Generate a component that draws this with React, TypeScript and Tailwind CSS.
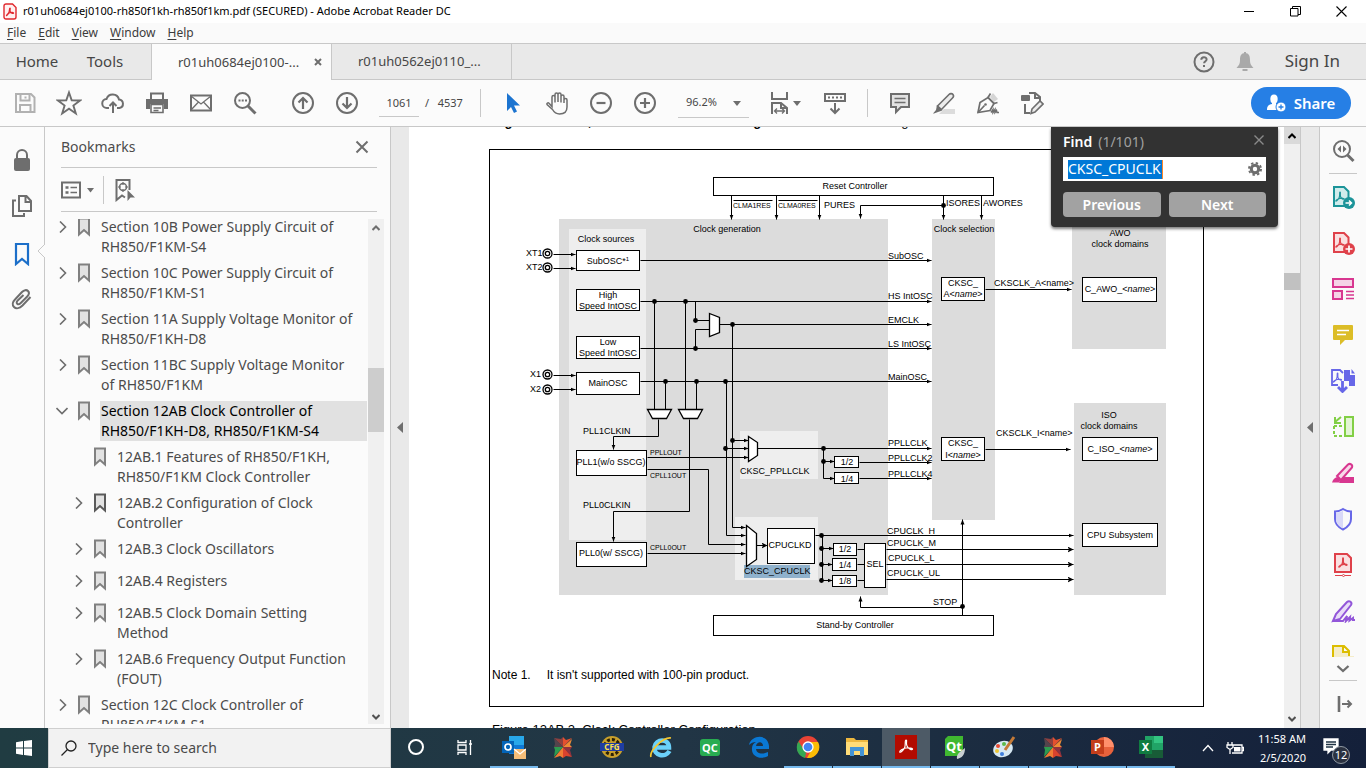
import React from "react";

type IconProps = { children: React.ReactNode; w?: number; h?: number; className?: string; sw?: number };

function Icon({ children, w = 24, h = 24, className = "text-[#6e6e6e]", sw = 2 }: IconProps) {
  return (
    <svg width={w} height={h} viewBox={`0 0 ${w} ${h}`} className={`shrink-0 ${className}`} fill="none" stroke="currentColor" strokeWidth={sw} aria-hidden="true">
      {children}
    </svg>
  );
}

function ToolButton({ label, children }: { label: string; children: React.ReactNode }) {
  return (
    <button type="button" aria-label={label} className="flex h-11 w-11 shrink-0 items-center justify-center">
      {children}
    </button>
  );
}

function TitleBar() {
  return (
    <header className="flex h-[23px] shrink-0 items-center bg-white">
      <svg width="14" height="17" viewBox="0 0 14 17" className="ml-[3px] shrink-0" fill="none" stroke="#e0282e" aria-hidden="true">
        <path d="M3 1h6.5L13 4.500V14a2 2 0 0 1-2 2H3a2 2 0 0 1-2-2V3a2 2 0 0 1 2-2Z" fill="#fff1f1" strokeWidth="1.4" />
        <path d="M7 5c-1 0-.3 3-1.200 4.500S3 12.500 3.500 12.700s1.800-2.500 3.200-3 4-.4 4 .4-2.200.3-3.200-1S7.800 5 7 5Z" strokeWidth="1.100" />
      </svg>
      <h1 className="ml-1.5 text-[11px] whitespace-nowrap text-black">r01uh0684ej0100-rh850f1kh-rh850f1km.pdf (SECURED) - Adobe Acrobat Reader DC</h1>
      <div className="mr-0.5 ml-auto flex text-black">
        <button type="button" aria-label="Minimize" className="flex h-5 w-[46px] items-center justify-center">
          <Icon w={11} h={11} sw={1} className="text-black"><path d="M0 5.500h10" /></Icon>
        </button>
        <button type="button" aria-label="Restore" className="flex h-5 w-[46px] items-center justify-center">
          <Icon w={11} h={11} sw={1} className="text-black"><path d="M.5 2.500h7.500v7.500H.5zM2.500 2.500v-2h8v8H8" /></Icon>
        </button>
        <button type="button" aria-label="Close" className="flex h-5 w-[46px] items-center justify-center">
          <Icon w={11} h={11} sw={1.1} className="text-black"><path d="m.5.5 10 10m0-10-10 10" /></Icon>
        </button>
      </div>
    </header>
  );
}

function MenuBar() {
  return (
    <nav className="flex h-5 shrink-0 items-center gap-3 bg-[#fafafa] pl-[7px] text-xs text-[#3c3c3c]">
      {["File", "Edit", "View", "Window", "Help"].map((m) => (
        <button type="button" key={m}>
          <span className="underline underline-offset-2">{m[0]}</span>
          {m.slice(1)}
        </button>
      ))}
    </nav>
  );
}

function TabBar() {
  return (
    <div className="flex h-[37px] shrink-0 border-y border-[#c8c8c8] bg-[#e9e9e9] text-sm text-[#464646]">
      <button type="button" className="w-[74px] text-[15px]">Home</button>
      <button type="button" className="w-[62px] text-[15px]">Tools</button>
      <div className="-mb-px ml-[15px] flex w-[181px] items-center border-x border-[#c8c8c8] bg-[#fbfbfb] pl-[26px] text-[13px]">
        <span className="w-[128px] whitespace-nowrap">r01uh0684ej0100-...</span>
        <button type="button" aria-label="Close tab" className="ml-2">
          <Icon w={8} h={8} sw={2}><path d="m1 1 6 6m0-6L1 7" /></Icon>
        </button>
      </div>
      <div className="flex w-[180px] items-center border-r border-[#c8c8c8] pl-[26px] text-[13px] whitespace-nowrap">r01uh0562ej0110_...</div>
      <div className="mr-[26px] ml-auto flex items-center">
        <button type="button" aria-label="Help">
          <Icon w={22} h={22}>
            <circle cx="11" cy="11" r="9.500" />
            <path d="M8.300 8.700c0-3.300 5.300-3.300 5.300-.2 0 1.800-2.500 1.800-2.500 3.800M11 14v2" />
          </Icon>
        </button>
        <button type="button" aria-label="Notifications" className="ml-5">
          <Icon w={20} h={22} className="text-[#a9a9a9]">
            <path d="M10 2c4 0 5 3 5 7 0 4 1 5 3.500 8h-17C4 14 5 13 5 9c0-4 1-7 5-7Z" fill="currentColor" stroke="none" />
            <path d="M10 1v3M7.500 19h5" />
          </Icon>
        </button>
        <button type="button" className="ml-[30px] text-[17px]">Sign In</button>
      </div>
    </div>
  );
}

function Toolbar() {
  return (
    <div className="flex h-[47px] shrink-0 items-center border-b border-[#c8c8c8] bg-[#fbfbfb] pl-[3px] text-[11px] text-[#464646]">
      <ToolButton label="Save">
        <Icon className="text-[#b1b1b1]">
          <path d="M3 3h15l3.500 3.500V21H3Z" />
          <path d="M7.500 3v6.500h9V3M7 21v-7h10.500v7M12.500 5.500v2" />
        </Icon>
      </ToolButton>
      <ToolButton label="Star">
        <Icon w={26} h={26}><path d="m13 2.500 2.700 7.800 8.300.2-6.600 5 2.400 8L13 18.700l-6.800 4.800 2.400-8-6.600-5 8.300-.2Z" strokeWidth="1.900" /></Icon>
      </ToolButton>
      <ToolButton label="Upload">
        <Icon><path d="M8 17H6a4.500 4.500 0 0 1-.5-9A6.500 6.500 0 0 1 18 8.500 4.300 4.300 0 0 1 18.500 17H16M12 22V11.500M8.500 15l3.500-3.500 3.500 3.500" /></Icon>
      </ToolButton>
      <ToolButton label="Print">
        <Icon><path d="M6 8V2.500h12V8" /><path d="M1 8h22v10h-4v-5H5v5H1Z" fill="currentColor" stroke="none" /><path d="M6 13.500h12v8H6zM8.500 17H16M8.500 19.500h5" strokeWidth="1.600" /></Icon>
      </ToolButton>
      <ToolButton label="Email">
        <Icon><path d="M2 4.500h20v15H2Z" /><path d="m2 5 10 8 10-8M2 19l7.500-8M22 19l-7.500-8" strokeWidth="1.300" /></Icon>
      </ToolButton>
      <ToolButton label="Find text">
        <Icon><circle cx="9.500" cy="9.500" r="7.500" /><path d="m15 15 7.500 7.500" strokeWidth="3" /><path d="M5.500 9.500h2M8.700 9.500h2M12 9.500h2" /></Icon>
      </ToolButton>
      <div className="ml-3.5 flex">
        <ToolButton label="Previous page">
          <Icon><circle cx="12" cy="12" r="10" /><path d="M12 18V7M7.500 11.500 12 7l4.500 4.500" strokeWidth="2.200" /></Icon>
        </ToolButton>
        <ToolButton label="Next page">
          <Icon><circle cx="12" cy="12" r="10" /><path d="M12 6v11M7.500 12.500 12 17l4.500-4.500" strokeWidth="2.200" /></Icon>
        </ToolButton>
      </div>
      <input aria-label="Page number" defaultValue="1061" className="ml-2.5 h-7 w-10 border-b border-[#c8c8c8] text-center" />
      <span className="ml-1.5 w-9 whitespace-pre">/   4537</span>
      <span className="ml-[19px] h-7 w-px bg-[#c8c8c8]" />
      <div className="ml-2.5 flex">
        <ToolButton label="Select">
          <Icon className="text-[#1c74d0]"><path d="M6 2v18l4-4 3 6 3-1.500-3-6h6Z" fill="currentColor" stroke="none" /></Icon>
        </ToolButton>
        <ToolButton label="Hand">
          <Icon>
            <path d="M7 13.500V6a1.500 1.500 0 0 1 3 0v5.500V3.500a1.500 1.500 0 0 1 3 0v7.500V3.500a1.500 1.500 0 0 1 3 0V11.500V5.500a1.500 1.500 0 0 1 3 0V12V9a1.500 1.500 0 0 1 3 0v7c0 4.500-3 7-7.500 7-3.500 0-5.300-1.500-7-4.500L2 13.500c-.6-1.200 1-2.300 2-1.300l3 3.300Z" strokeWidth="1.500" />
          </Icon>
        </ToolButton>
        <ToolButton label="Zoom out">
          <Icon><circle cx="12" cy="12" r="10" /><path d="M7.500 12h9" strokeWidth="2.200" /></Icon>
        </ToolButton>
        <ToolButton label="Zoom in">
          <Icon><circle cx="12" cy="12" r="10" /><path d="M7 12h10M12 7v10" strokeWidth="2.200" /></Icon>
        </ToolButton>
      </div>
      <div className="relative ml-[11px] w-[71px] border-b border-[#c8c8c8]">
        <select aria-label="Zoom level" className="h-7 w-full appearance-none bg-transparent pl-2">
          <option>96.2%</option>
        </select>
        <svg width="8" height="5" viewBox="0 0 8 5" className="pointer-events-none absolute top-3 right-2" aria-hidden="true"><path d="M0 0h8L4 5Z" fill="#6e6e6e" /></svg>
      </div>
      <button type="button" aria-label="Fit width" className="ml-5 flex h-11 w-8 items-center">
        <Icon w={32}>
          <path d="M3 1v7h15V1M3 23v-11h9l6 5v6M12 12v5h6" />
          <path d="M6 20h9M8 17.500 5.500 20 8 22.500M13 17.500l2.500 2.500-2.500 2.500" strokeWidth="1.300" />
          <path d="M24 10h8l-4 5Z" fill="currentColor" stroke="none" />
        </Icon>
      </button>
      <div className="ml-3">
        <ToolButton label="Scrolling">
          <Icon><path d="M2 3h20v7H2ZM12 12v10M7.500 17.500 12 22l4.500-4.500" /><path d="M5 6.500h2M9 6.500h2M13 6.500h2M17 6.500h2" strokeWidth="1.800" /></Icon>
        </ToolButton>
      </div>
      <span className="ml-2.5 h-7 w-px bg-[#c8c8c8]" />
      <div className="ml-2.5 flex">
        <ToolButton label="Comment">
          <Icon><path d="M3 3h18v13h-8l-5 5v-5H3Z" fill="#e2e2e2" /><path d="M6.500 7.500h11M6.500 11.500h11" strokeWidth="1.300" /></Icon>
        </ToolButton>
        <ToolButton label="Highlight">
          <Icon><path d="M12 18h11v5H7Z" fill="#dcdcdc" stroke="none" /><path d="M5.500 15 17 3.500c1-1 3-1.300 4 0s.5 2.500-.5 3.500L9.500 18.500Z" fill="#ececec" strokeWidth="1.600" /><path d="m5 14 5.500 5-1.500 1-3 1-4 1.500H1L4 19Z" fill="currentColor" stroke="none" /></Icon>
        </ToolButton>
        <ToolButton label="Sign">
          <Icon>
            <path d="m14 6 3-4 5 6-4 3Z" fill="#d5d5d5" stroke="none" />
            <path d="M2 21.500 4 11.500l8-5 6 6-4 7Z" strokeWidth="1.700" />
            <path d="m2 21.500 6.500-7M14.500 2.500 12 6.500l6 6 3.500-1" strokeWidth="1.700" />
            <circle cx="9.500" cy="13.500" r="1.300" fill="currentColor" stroke="none" />
            <path d="m15 21.500 2-3v3l2-3v3l1.500-2 .5 2h2" strokeWidth="1.500" />
          </Icon>
        </ToolButton>
        <ToolButton label="Edit PDF">
          <Icon><path d="M9 2h6l5 4v4M15 2v5h5M5 13v9h5" /><rect x="1" y="4" width="9" height="6" rx="1" fill="currentColor" stroke="none" /><path d="m12 18 8-8 3 3-8 8-4 1.500Z" fill="#ececec" strokeWidth="1.600" /></Icon>
        </ToolButton>
      </div>
      <button type="button" className="mr-[15px] ml-auto flex h-8 w-[100px] items-center justify-center gap-2 rounded-full bg-[#267fe5] text-[15px] font-semibold text-white">
        <svg width="19" height="18" viewBox="0 0 19 18" aria-hidden="true">
          <ellipse cx="7" cy="5" rx="3.700" ry="4.500" fill="#fff" />
          <path d="M0 15c0-3 2-4.500 5-5v-2h4v2l2 1v5H0Z" fill="#fff" />
          <circle cx="14" cy="13" r="5" fill="#fff" stroke="#267fe5" />
          <path d="M14 10.500v5M11.500 13h5" stroke="#267fe5" strokeWidth="1.300" />
        </svg>
        Share
      </button>
    </div>
  );
}

function LeftRail() {
  return (
    <nav className="relative flex w-[45px] shrink-0 flex-col items-start border-r border-[#c8c8c8] bg-[#fbfbfb] pt-2.5">
      <button type="button" aria-label="Security" className="flex h-[46px] w-11 items-center justify-center">
        <Icon><rect x="4" y="10" width="16" height="13" rx="2" fill="currentColor" stroke="none" /><path d="M7 12V7a5 5 0 0 1 10 0v5" /></Icon>
      </button>
      <button type="button" aria-label="Pages" className="flex h-[46px] w-11 items-center justify-center">
        <Icon><path d="M9 2h7.500L21 7v10H9ZM15.500 2v6H21" /><path d="M6 6.500H3V22h11v-3" /></Icon>
      </button>
      <button type="button" aria-label="Bookmarks" className="flex h-[46px] w-11 items-center justify-center pt-1">
        <Icon className="text-[#1c6fc9]" sw={2.2}><path d="M6 2h12v20l-6-5-6 5Z" /></Icon>
      </button>
      <button type="button" aria-label="Attachments" className="flex h-[46px] w-11 items-center justify-center pt-0.5">
        <Icon><path d="m20.500 10-8 8.500c-3 3-6.500 3.500-8.500 1.500s-1.500-5 1-7.500l7-7.500c2-2 4.500-2.500 6-1s1 3.700-1 5.700l-6.500 6.500c-1.200 1.200-2.500 1.300-3.300.5s-.7-2 .5-3.200L13.500 8" /></Icon>
      </button>
      <svg width="8" height="14" viewBox="0 0 8 14" className="absolute top-[117px] -right-px" aria-hidden="true"><path d="M8 0 1 7l7 7" fill="#fbfbfb" stroke="#c8c8c8" /></svg>
    </nav>
  );
}

type Bookmark = { lines: string[]; child?: boolean; arrow?: "right" | "down"; selected?: boolean; dark?: boolean };

const bookmarks: Bookmark[] = [
  { lines: ["Section 10B Power Supply Circuit of", "RH850/F1KM-S4"], arrow: "right" },
  { lines: ["Section 10C Power Supply Circuit of", "RH850/F1KM-S1"], arrow: "right" },
  { lines: ["Section 11A Supply Voltage Monitor of", "RH850/F1KH-D8"], arrow: "right" },
  { lines: ["Section 11BC Supply Voltage Monitor", "of RH850/F1KM"], arrow: "right" },
  { lines: ["Section 12AB Clock Controller of", "RH850/F1KH-D8, RH850/F1KM-S4"], arrow: "down", selected: true },
  { lines: ["12AB.1 Features of RH850/F1KH,", "RH850/F1KM Clock Controller"], child: true },
  { lines: ["12AB.2 Configuration of Clock", "Controller"], child: true, arrow: "right", dark: true },
  { lines: ["12AB.3 Clock Oscillators"], child: true, arrow: "right" },
  { lines: ["12AB.4 Registers"], child: true, arrow: "right" },
  { lines: ["12AB.5 Clock Domain Setting", "Method"], child: true, arrow: "right" },
  { lines: ["12AB.6 Frequency Output Function", "(FOUT)"], child: true, arrow: "right" },
  { lines: ["Section 12C Clock Controller of", "RH850/F1KM-S1"], arrow: "right" },
];

function BookmarksPanel() {
  return (
    <aside className="flex w-[346px] shrink-0 flex-col border-r border-[#c8c8c8] bg-[#fbfbfb] pb-1">
      <div className="mr-[13px] ml-4 flex h-[41px] shrink-0 items-center justify-between border-b border-[#c8c8c8] pr-2 text-sm text-[#4b4b4b]">
        <h2>Bookmarks</h2>
        <button type="button" aria-label="Close panel"><Icon w={14} h={14}><path d="m1.500 1.500 11 11m0-11-11 11" /></Icon></button>
      </div>
      <div className="mr-[13px] ml-4 flex h-11 shrink-0 items-center border-b border-[#c8c8c8]">
        <button type="button" aria-label="Options" className="flex items-center">
          <Icon w={33} h={18}>
            <path d="M1 1.500h18v15H1Z" />
            <path d="M4.500 6.500h3M4.500 11.500h3" strokeWidth="2.600" />
            <path d="M9.500 6.500H16M9.500 11.500H16" strokeWidth="1.600" />
            <path d="M26 7h7l-3.500 4.500Z" fill="currentColor" stroke="none" />
          </Icon>
        </button>
        <span className="ml-[9px] h-7 w-px bg-[#c8c8c8]" />
        <button type="button" aria-label="Find current bookmark" className="ml-2.5">
          <Icon w={22}>
            <path d="M15.500 12V2h-13v20l5.500-4.500 3 2" />
            <circle cx="9" cy="9" r="3.500" strokeWidth="1.500" />
            <path d="M9 4v3M9 11v3M4 9h3M11 9h3" strokeWidth="1.200" />
            <path d="M13.500 12v11l3-3.500h4.500Z" fill="currentColor" stroke="none" />
          </Icon>
        </button>
      </div>
      <div className="mr-1.5 ml-[11px] mt-[7px] flex min-h-0 flex-1">
        <ul className="min-w-0 flex-1 overflow-hidden text-[14px] leading-5 text-[#4b4b4b]">
          {bookmarks.map((b, i) => (
            <li key={b.lines[0]} className={`flex min-h-8 items-start py-[3px] ${i === 0 ? "-mt-[5px]" : ""} ${b.child ? "pl-4" : ""}`}>
              <button type="button" aria-label="Toggle" className="mt-1 h-3 w-3 shrink-0">
                {b.arrow === "right" && <Icon w={12} h={12} sw={1.6} className="block text-[#6e6e6e]"><path d="m4 .5 5.500 5.500L4 11.500" /></Icon>}
                {b.arrow === "down" && <Icon w={12} h={12} sw={1.6} className="block text-[#6e6e6e]"><path d="M.5 3 6 8.500 11.500 3" /></Icon>}
              </button>
              <Icon w={14} h={20} className={`ml-[9px] ${b.dark ? "text-[#5a5a5a]" : "text-[#808080]"}`}>
                <path d="M2 1.500h10v16l-5-4.500-5 4.500Z" fill="#e2e2e2" />
              </Icon>
              <a href="#bookmark" className={`ml-[9px] block flex-1 pl-px whitespace-nowrap ${b.selected ? "bg-[#e1e1e1] text-black" : ""}`}>
                {b.lines.map((l) => <span key={l} className="block">{l}</span>)}
              </a>
            </li>
          ))}
        </ul>
        <div className="ml-px flex w-4 shrink-0 flex-col items-center justify-between bg-[#f0f0f0] pt-1.5 pb-1">
          <Icon w={8} h={6}><path d="m.5 5 3.500-3.500L7.500 5" /></Icon>
          <div className="mt-[137px] h-16 w-full bg-[#cdcdcd]" />
          <Icon w={8} h={6} className="mt-auto text-[#505050]"><path d="M.5 1 4 4.500 7.500 1" /></Icon>
        </div>
      </div>
    </aside>
  );
}

function Splitter() {
  return (
    <button type="button" aria-label="Collapse panel" className="flex w-[18px] shrink-0 items-center justify-center bg-[#e9e9e9]">
      <svg width="6" height="11" viewBox="0 0 6 11" aria-hidden="true"><path d="M6 0v11L0 5.500Z" fill="#6e6e6e" /></svg>
    </button>
  );
}

const boxes: [number, number, number, number][] = [
  [713, 177, 280, 18], [576, 250, 63, 20], [576, 289, 63, 21], [576, 336, 63, 22], [576, 372, 63, 22],
  [576, 450, 70, 25], [576, 542, 70, 24], [834, 456, 24, 11], [834, 472, 24, 11], [767, 528, 47, 35],
  [833, 543, 23, 12], [832, 558, 24, 12], [832, 575, 24, 11], [864, 543, 21, 44], [941, 277, 43, 23],
  [941, 437, 43, 23], [1082, 277, 74, 24], [1082, 437, 75, 23], [1082, 523, 75, 23], [713, 615, 280, 20],
];

const arrows: string[] = [
  "M731 195V219", "M776 195V219", "M819 195V219", "M943 195V219", "M981 195V219", "M943 205H860V218",
  "M553 254H575", "M553 268H575", "M553 375H575", "M553 389H575",
  "M640 260H931", "M640 301H931", "M719 324H931", "M640 348H931", "M640 381H931",
  "M658 419V436H613V449", "M689 419V511H613V541", "M647 457H748", "M647 469H708V544H745", "M647 553H745",
  "M732 324V527H745", "M732 440H748", "M726 381V535H745", "M725 448H748",
  "M757 448H931", "M823 461H834", "M823 448V478H834", "M859 462H931", "M859 478H931",
  "M815 535H1073", "M822 548H833", "M822 564H832", "M822 535V580H832",
  "M963 607H860V596", "M962 615V519", "M985 289H1071", "M985 449H1070",
];

const boldArrows: string[] = ["M756 545H767", "M886 549H1073", "M886 564H1073", "M886 579H1073"];

const wires: string[] = [
  "M654 301V409", "M685 301V409", "M665 381V409", "M696 381V409",
  "M695 301V320H709", "M695 348V329H709", "M857 549H864", "M857 564H864", "M857 580H864",
];

const dots: [number, number][] = [
  [943, 205], [654, 301], [685, 301], [695, 320], [695, 348], [732, 324], [665, 381], [696, 381], [725, 381],
  [732, 440], [725, 448], [823, 448], [823, 461], [821, 535], [821, 548], [821, 564], [821, 580], [962, 606],
];

type Label = [number, number, string, ("middle" | "start")?, number?];

const labels: Label[] = [
  [855, 189, "Reset Controller", "middle"],
  [733, 208, "CLMA1RES", "start", 7], [778, 208, "CLMA0RES", "start", 7],
  [824, 208, "PURES"], [946, 206, "ISORES"], [983, 206, "AWORES"],
  [727, 232, "Clock generation", "middle"], [606, 242, "Clock sources", "middle"], [964, 232, "Clock selection", "middle"],
  [526, 256, "XT1"], [526, 270, "XT2"], [530, 377, "X1"], [530, 392, "X2"],
  [608, 298, "High", "middle"], [608, 309, "Speed IntOSC", "middle"],
  [608, 345, "Low", "middle"], [608, 356, "Speed IntOSC", "middle"], [608, 386, "MainOSC", "middle"],
  [888, 259, "SubOSC"], [888, 299, "HS IntOSC"], [888, 323, "EMCLK"], [888, 347, "LS IntOSC"], [888, 380, "MainOSC"],
  [583, 434, "PLL1CLKIN"], [583, 508, "PLL0CLKIN"],
  [611, 465, "PLL1(w/o SSCG)", "middle"], [611, 556, "PLL0(w/ SSCG)", "middle"],
  [650, 455, "PPLLOUT", "start", 7], [650, 478, "CPLL1OUT", "start", 7], [650, 550, "CPLL0OUT", "start", 7],
  [740, 474, "CKSC_PPLLCLK"], [790, 548, "CPUCLKD", "middle"], [744, 574, "CKSC_CPUCLK"],
  [847, 465, "1/2", "middle"], [847, 482, "1/4", "middle"],
  [845, 552, "1/2", "middle"], [845, 568, "1/4", "middle"], [845, 584, "1/8", "middle"], [875, 567, "SEL", "middle"],
  [888, 446, "PPLLCLK"], [888, 461, "PPLLCLK2"], [888, 477, "PPLLCLK4"],
  [887, 534, "CPUCLK_H"], [887, 546, "CPUCLK_M"], [888, 561, "CPUCLK_L"], [887, 576, "CPUCLK_UL"],
  [933, 605, "STOP"], [855, 628, "Stand-by Controller", "middle"],
  [963, 286, "CKSC_", "middle"], [963, 446, "CKSC_", "middle"],
  [994, 286, "CKSCLK_A<name>"], [996, 436, "CKSCLK_I<name>"],
  [1120, 236, "AWO", "middle"], [1120, 247, "clock domains", "middle"],
  [1109, 418, "ISO", "middle"], [1109, 429, "clock domains", "middle"],
  [1120, 538, "CPU Subsystem", "middle"],
];

const named: [number, number, string][] = [
  [963, 297, "A"], [963, 458, "I"], [1120, 292, "C_AWO_"], [1120, 452, "C_ISO_"],
];

function ClockDiagram() {
  return (
    <svg width="713" height="500" viewBox="490 150 713 500" className="block shrink-0" role="img" aria-label="Clock controller configuration">
      <defs>
        <marker id="tip" markerUnits="userSpaceOnUse" markerWidth="6" markerHeight="6" refX="5" refY="2.500" orient="auto">
          <path d="M0 .5 5 2.500 0 4.500Z" />
        </marker>
        <marker id="wide-tip" markerUnits="userSpaceOnUse" markerWidth="7" markerHeight="7" refX="6" refY="3" orient="auto">
          <path d="M0 0 6 3 0 6l1.500-3Z" />
        </marker>
      </defs>
      <g fill="#dcdcdc">
        <path d="M559 219h329v376H559ZM932 219h63v301h-63ZM1072 200h94v149h-94ZM1074 403h92v192h-92Z" />
        <path d="M569 229h77v311h-77ZM740 431h78v48h-78ZM735 517h83v63h-83Z" fill="#eeeeee" />
        <path d="M744 565h66v13h-66Z" fill="#8fb1cc" />
      </g>
      <g transform="translate(.5 .5)" fill="none" stroke="#000" strokeWidth="1">
        {arrows.map((d) => <path key={d} d={d} markerEnd="url(#tip)" />)}
        {boldArrows.map((d) => <path key={d} d={d} markerEnd="url(#wide-tip)" />)}
        {wires.map((d) => <path key={d} d={d} />)}
        <path d="M733 200h39M778 200h39" />
        {boxes.map(([x, y, w, h]) => <rect key={`${x}-${y}`} x={x} y={y} width={w} height={h} fill="#fff" />)}
        <path d="m709 313 10 4v15l-10 4ZM647 409h24l-5 9h-14ZM678 409h24l-5 9h-14ZM748 436l9 6v13l-9 6ZM746 525l10 8v26l-10 7Z" fill="#fff" strokeWidth="1.300" />
        {[253, 267, 374, 389].map((y) => (
          <g key={y} strokeWidth="1.300">
            <circle cx="547" cy={y} r="4.500" fill="#fff" />
            <circle cx="547" cy={y} r="2.200" />
          </g>
        ))}
        {dots.map(([x, y]) => <circle key={`${x}-${y}`} cx={x} cy={y} r="2.400" fill="#000" stroke="none" />)}
      </g>
      <g className="font-['Liberation_Sans',sans-serif]" fontSize="9" fill="#000">
        {labels.map(([x, y, t, a = "start", s = 9]) => <text key={`${x}-${y}`} x={x} y={y} textAnchor={a} fontSize={s}>{t}</text>)}
        {named.map(([x, y, t]) => (
          <text key={`${x}-${y}`} x={x} y={y} textAnchor="middle">{t}&lt;<tspan fontStyle="italic">name</tspan>&gt;</text>
        ))}
        <text x="608" y="264" textAnchor="middle">SubOSC*<tspan fontSize="6" dy="-3">1</tspan></text>
      </g>
    </svg>
  );
}

function FindBox() {
  return (
    <form className="absolute top-0 right-1.5 w-[227px] rounded-b bg-[#323232] px-3 pb-2.5 text-sm shadow-[0_2px_3px_rgba(0,0,0,0.5)]" onSubmit={(e) => e.preventDefault()}>
      <div className="flex h-[30px] items-center">
        <label htmlFor="find" className="font-semibold text-white">Find</label>
        <span className="ml-1.5 text-[#a0a0a0]">(1/101)</span>
        <button type="button" aria-label="Close find" className="mr-0.5 mb-1 ml-auto">
          <Icon w={10} h={10} sw={1.4} className="text-[#8a8a8a]"><path d="m.5.5 9 9m0-9-9 9" /></Icon>
        </button>
      </div>
      <div className="flex h-6 items-center bg-white px-[5px]">
        <input id="find" defaultValue="CKSC_CPUCLK" className="h-[19px] w-[95px] border-r border-[#ff8728] bg-[#0078d7] text-sm text-white outline-none" />
        <button type="button" aria-label="Find options" className="-mr-0.5 ml-auto">
          <Icon w={16} h={16}>
            <circle cx="8" cy="8" r="3.700" strokeWidth="3" />
            <circle cx="8" cy="8" r="6" strokeWidth="2" strokeDasharray="2.360 2.352" />
          </Icon>
        </button>
      </div>
      <div className="mt-[11px] flex gap-2 font-semibold text-white">
        <button type="button" className="h-[25px] flex-1 rounded-sm bg-[#a2a2a2]">Previous</button>
        <button type="button" className="h-[25px] flex-1 rounded-sm bg-[#a2a2a2]">Next</button>
      </div>
    </form>
  );
}

function DocumentView() {
  return (
    <main className="relative min-w-0 flex-1 overflow-hidden bg-white font-['Liberation_Sans',sans-serif] text-black">
      <div className="ml-20 w-[715px]">
        <p className="-mt-[13px] flex h-[35px] pl-1 text-[13px] leading-4 font-bold whitespace-nowrap">
          <span>Figure 12AB.10,</span>
          <span className="ml-6">Clock Controller Configuration</span>
          <span className="ml-24 font-normal">g</span>
        </p>
        <figure className="mb-3.5">
          <div className="h-[558px] border border-black">
            <ClockDiagram />
            <p className="mt-[17px] flex gap-4 pl-0.5 text-xs leading-4"><span>Note 1.</span><span>It isn't supported with 100-pin product.</span></p>
          </div>
          <figcaption className="mt-[13px] pl-[3px] text-[13px] whitespace-pre">Figure 12AB.2  Clock Controller Configuration</figcaption>
        </figure>
      </div>
      <div className="font-['Noto_Sans',sans-serif]"><FindBox /></div>
    </main>
  );
}

function DocumentScrollbar() {
  return (
    <div className="flex w-[17px] shrink-0 flex-col items-center border-r border-[#c8c8c8] bg-[#f0f0f0]">
      <div className="flex h-[17px] w-4 items-center justify-center bg-[#dadada]"><Icon w={8} h={6} className="text-black"><path d="m.5 5 3.500-3.500L7.500 5" /></Icon></div>
      <div className="mt-[129px] h-[17px] w-full bg-[#c1c1c1]" />
      <Icon w={8} h={6} className="mt-auto mb-1.5 text-[#505050]"><path d="M.5 1 4 4.500 7.500 1" /></Icon>
    </div>
  );
}

const pdfMark = "M9 7c-.8 0 .3 4-1 6s-3 3.500-3.200 3 1.700-2 4-2.500 4.500-.3 4.200.5-3-.3-3.500-2.500S9.800 7 9 7Z";

const rightTools: { label: string; color: string; art: React.ReactNode }[] = [
  { label: "Search tools", color: "text-[#6e6e6e]", art: <><circle cx="11" cy="10" r="8" /><path d="m16.500 16 6 6" strokeWidth="3" /><path d="M10 6.500v7L6.500 10ZM12 6.500v7l3.500-3.500Z" fill="currentColor" stroke="none" /></> },
  { label: "Export PDF", color: "text-[#1c9499]", art: <><path d="M3 2h10l4.500 4.500V21H3Z" fill="#d0ecec" /><path d={pdfMark} strokeWidth="1.200" /><circle cx="18" cy="18" r="6" fill="currentColor" stroke="none" /><path d="M14.500 18h6M18 15.500l2.500 2.500-2.500 2.500" stroke="#fff" strokeWidth="1.500" /></> },
  { label: "Create PDF", color: "text-[#df414a]", art: <><path d="M3 2h10l4.500 4.500V21H3Z" fill="#fae0e1" /><path d={pdfMark} strokeWidth="1.200" /><circle cx="18" cy="18" r="6" fill="currentColor" stroke="none" /><path d="M14.500 18h7M18 14.500v7" stroke="#fff" strokeWidth="1.700" /></> },
  { label: "Organize pages", color: "text-[#d83790]", art: <><path d="M2 2h20v8H2ZM2 14h9v8H2Z" fill="#f5d3e6" /><path d="M15 14.500h8M15 18h8M15 21.500h8" strokeWidth="1.300" /></> },
  { label: "Comment", color: "text-[#dcbd27]", art: <><path d="M3 2h18a1 1 0 0 1 1 1v13a1 1 0 0 1-1 1h-7l-5 5v-5H3a1 1 0 0 1-1-1V3a1 1 0 0 1 1-1Z" fill="currentColor" stroke="none" /><path d="M6 7.500h12M6 11.500h9" stroke="#fff" strokeWidth="1.500" /></> },
  { label: "Combine files", color: "text-[#6767e8]", art: <><path d="M7 16H1V1h8l3 3" strokeWidth="1.800" /><path d={pdfMark} strokeWidth="1.100" transform="translate(-2.500 -3)" /><path d="M13 1h6v5h5v11h-6v-5h-5ZM20.500 0 24 4.500h-3.500Z" fill="currentColor" stroke="none" /><path d="M11.500 12v10M7 18l4.500 4.500L16 18" strokeWidth="2.800" /></> },
  { label: "Compress PDF", color: "text-[#82cf45]", art: <><path d="M14 2h8v19h-8Z" fill="#e3f5d5" /><path d="M3 11v10h9M3 11h8" strokeDasharray="3 2" /><path d="m10 2-6 5M4 2v6h6" /></> },
  { label: "Redact", color: "text-[#d83790]", art: <><path d="M11 16h12v6H8Z" fill="currentColor" stroke="none" /><path d="M6 15 17 3.500c2-1.500 5 0 4 3L10 19Z" fill="#f8d9e9" /><path d="m6 16 4 3-2 2.500H1C2 18 4 17 6 16Z" fill="currentColor" stroke="none" /></> },
  { label: "Protect", color: "text-[#6767e8]", art: <><path d="M12 2c3 2 5 2.500 8 2.500V12c0 5-3 8-8 10.500C7 20 4 17 4 12V4.500C7 4.500 9 4 12 2Z" /><path d="M12 3.500C10 5 8 5.500 5 5.500V12c0 4 2 7 7 9.500Z" fill="#d9d9f8" stroke="none" /></> },
  { label: "Optimize PDF", color: "text-[#df414a]", art: <><path d="M4 1h12l4 4v14H4Z" fill="#fae0e1" /><path d={pdfMark} strokeWidth="1.300" transform="translate(3 -2)" /><path d="M4 22.500h7M14 22.500h6" strokeWidth="1.200" /><circle cx="12.500" cy="22.500" r="1" strokeWidth="1" /></> },
  { label: "Fill and sign", color: "text-[#9256d9]", art: <><path d="m2 22 3-7L16 3c2.500-2 5.500.5 4 3L9 20Z" fill="#e8dcf8" /><path d="M2 22h10l4-5-1 5 4-4-.5 3.500L22 19v2h2" /></> },
];

function ToolsRail() {
  return (
    <aside className="flex w-[47px] shrink-0 flex-col items-center border-l border-[#c8c8c8] bg-[#fafafa] pt-px">
      {rightTools.map((t, i) => (
        <button type="button" key={t.label} aria-label={t.label} className={`flex h-[46px] w-7 shrink-0 items-center justify-center ${i === 0 ? "border-b border-[#c8c8c8]" : ""}`}>
          <Icon className={t.color}>{t.art}</Icon>
        </button>
      ))}
      <div className="flex h-[23px] w-7 shrink-0 justify-center overflow-hidden pt-2.5">
        <Icon className="text-[#dcbd00]"><path d="M2 20V2h11l5 5v9M12 2v6h6" fill="#f5edc8" /><path d="M17 12h6v8h-6Z" fill="#f5edc8" stroke="none" /></Icon>
      </div>
      <button type="button" aria-label="More tools" className="flex h-6 w-7 shrink-0 items-center justify-center border-b border-[#c8c8c8]">
        <Icon w={14} h={8}><path d="m1.500 1 5.500 5 5.500-5" strokeWidth="2.300" /></Icon>
      </button>
      <button type="button" aria-label="Expand tools" className="flex h-[46px] w-7 shrink-0 items-center justify-center pl-1">
        <Icon w={16} h={16}><path d="M2 0v16" strokeWidth="2.600" /><path d="M5 8h9M10.500 4.500 14 8l-3.500 3.500" /></Icon>
      </button>
    </aside>
  );
}

const pinwheel = (
  <>
    <path d="M12 12 3 3l7 1 2-2Z" fill="#8d4040" />
    <path d="M12 12V2l3 3 6-2Z" fill="#e4502f" />
    <path d="m12 12 9-8-2 6 2 2Z" fill="#f08a35" />
    <path d="M12 12h9l-2 3 2 7Z" fill="#8f3140" />
    <path d="m12 12 9 10-6-1-3 2Z" fill="#d9432d" />
    <path d="M12 12v11l-3-2-6 2Z" fill="#ef7c33" />
    <path d="M12 12 3 22l1-7-1-3Z" fill="#2e9b4f" />
    <path d="M12 12H3l1-3-1-6Z" fill="#54444c" />
  </>
);

const apps: { label: string; open?: boolean; active?: boolean; art: React.ReactNode }[] = [
  { label: "Cortana", art: <circle cx="12" cy="12" r="7" fill="none" stroke="#fff" strokeWidth="2" /> },
  { label: "Task view", art: <path d="M5 5v2.500h8V5M5 10h8v5H5ZM5 20v-2.500h8V20M17.500 5v15M16 9h3" fill="none" stroke="#fff" strokeWidth="1.300" /> },
  { label: "Outlook", open: true, art: <><path d="M7 1h15v18H7Z" fill="#28a8ea" /><path d="M7 10h15v9H7Z" fill="#0f78d4" /><path d="M0 6h12v12H0Z" fill="#0364b8" /><circle cx="6" cy="12" r="3" fill="none" stroke="#fff" strokeWidth="1.700" /><path d="M12 14h12v10H12Z" fill="#f4bd78" /><path d="m12 14 6 5 6-5" fill="none" stroke="#fff" strokeWidth="1.300" /></> },
  { label: "Pinwheel", art: pinwheel },
  { label: "CFG", art: <><circle cx="12" cy="12" r="11" fill="#c9a02c" /><circle cx="12" cy="12" r="7.500" fill="none" stroke="#292006" strokeWidth="3" strokeDasharray="3 2" /><path d="M0 8h24v8H0Z" fill="#1f3da1" /><text x="12" y="15" fontSize="8" fontWeight="bold" fill="#ffe04a" textAnchor="middle">CFG</text></> },
  { label: "Internet Explorer", art: <><path d="M20.500 16c-4 7-16 5-15-4C6.500 3.500 20 3 20 12.500H7" fill="none" stroke="#6bd1fa" strokeWidth="4.500" /><path d="M2 22C0 16 14 2 22 3" fill="none" stroke="#f5c72f" strokeWidth="1.700" /></> },
  { label: "QC", art: <><rect x="2" y="4" width="20" height="17" rx="3" fill="#28ac51" /><text x="12" y="17" fontSize="11" fontWeight="bold" fill="#fff" textAnchor="middle">QC</text></> },
  { label: "Edge", art: <path d="M2 10C4 0 21-2 22 11v3H9c1 6 8 5 12 3v4C14 25 4 22 5 13c0-3 2-5 4-6-3 0-5 1-7 3Zm7 1h7c0-5-6-5-7 0Z" fill="#0a78d4" /> },
  { label: "Chrome", open: true, art: <><circle cx="12" cy="12" r="11" fill="#e94335" /><path d="M2.500 6.500 10 18l-1 5A11 11 0 0 1 2.500 6.500Z" fill="#34a853" /><path d="M12 7h10a11 11 0 0 1-11 16l5-9Z" fill="#fbbc05" /><circle cx="12" cy="12" r="5" fill="#4285f4" stroke="#fff" strokeWidth="1.300" /></> },
  { label: "File Explorer", open: true, art: <><path d="M1 3h8l2 2h12v15H1Z" fill="#edb83f" /><path d="M1 7h22v13H1Z" fill="#ffdc78" /><path d="M5 12h14v9h-4v-5H9v5H5Z" fill="#4494d5" /></> },
  { label: "Acrobat Reader", open: true, active: true, art: <><path d="M1 0h22v24H1Z" fill="#b30b00" /><path d="M12 5c-1.500 0 0 5-1.500 8s-4.500 5-4.800 4 3-3.500 6.300-4 7 .2 6.500 1.200-4-.2-5.500-3.200S13.500 5 12 5Z" fill="none" stroke="#fff" strokeWidth="1.200" /></> },
  { label: "Qt Creator", open: true, art: <><path d="M5 1h15v17l-3 3H2V4Z" fill="#40b830" /><text x="11" y="16" fontSize="13" fontWeight="bold" fill="#fff" textAnchor="middle">Qt</text><path d="M14 24c-1-5 4-8 8-11 0 7-3 10-8 11Z" fill="#c9d0d2" /></> },
  { label: "Paint", open: true, art: <><ellipse cx="11" cy="14" rx="10" ry="8" fill="#d7e8f2" transform="rotate(-20 11 14)" /><circle cx="6" cy="11" r="2" fill="#e64a35" /><circle cx="12" cy="9" r="2" fill="#5dba4b" /><circle cx="5" cy="16" r="2" fill="#ecc433" /><circle cx="10" cy="19" r="2" fill="#407edb" /><path d="m22 2-9 13" stroke="#c57a37" strokeWidth="3" /></> },
  { label: "Pinwheel tool", open: true, art: pinwheel },
  { label: "PowerPoint", open: true, art: <><circle cx="14" cy="12" r="10" fill="#e8623c" /><path d="M14 2a10 10 0 0 1 10 10H14Z" fill="#ff8f6b" /><path d="M1 5h13v14H1Z" fill="#c43e1c" /><text x="7.500" y="16" fontSize="11" fontWeight="bold" fill="#fff" textAnchor="middle">P</text></> },
  { label: "Excel", open: true, art: <><path d="M6 1h18v22H6Z" fill="#21a366" /><path d="M15 1h9v7h-9Z" fill="#33c481" /><path d="M6 15h18v8H6Z" fill="#185c37" /><path d="M0 5h13v14H0Z" fill="#107c41" /><text x="6.500" y="16" fontSize="11" fontWeight="bold" fill="#fff" textAnchor="middle">X</text></> },
];

function Taskbar() {
  return (
    <footer className="flex h-10 shrink-0 items-stretch bg-linear-to-r from-[#203c42] via-[#213545] to-[#14203a] text-white">
      <button type="button" aria-label="Start" className="flex w-12 items-center justify-center">
        <svg width="16" height="16" viewBox="0 0 16 16" aria-hidden="true"><path d="M0 2.200 7 1v6.500H0ZM8 .900 16 0v7.500H8ZM0 8.500h7V15L0 13.800ZM8 8.500h8V16l-8-1Z" fill="#fff" /></svg>
      </button>
      <label className="flex w-[343px] items-center border border-[#cfcfcf] bg-[#f2f2f2] pl-3 text-[#3a3a3a]">
        <Icon w={16} h={16} sw={1.3} className="text-[#222]"><circle cx="10" cy="6" r="5" /><path d="m6.500 9.500-6 6" /></Icon>
        <input aria-label="Search" placeholder="Type here to search" className="ml-[11px] w-60 bg-transparent text-sm placeholder:text-[#4a4a4a]" />
      </label>
      <div className="ml-px flex">
        {apps.map((a) => (
          <button type="button" key={a.label} aria-label={a.label} className={`mr-px flex w-12 items-center justify-center border-b-2 ${a.open ? "border-[#76b9ed]" : "border-transparent"} ${a.active ? "bg-[#4d5a66]" : ""}`}>
            <svg width="24" height="24" viewBox="0 0 24 24" aria-hidden="true">{a.art}</svg>
          </button>
        ))}
      </div>
      <div className="mr-4 ml-auto flex items-center">
        <Icon w={12} h={8} sw={1.3} className="text-white"><path d="m1 7 5-5.500L11 7" /></Icon>
        <Icon w={18} h={16} sw={1.3} className="ml-3 text-white"><path d="M6 5h10v8H6M16 7.500h1.500v3H16M2 2v3M6 2v3M1 5h6v2.500L4 9.500 1 7.500ZM4 9v5" /><path d="M8 7h6.500v4.500H8Z" fill="currentColor" stroke="none" /></Icon>
        <div className="ml-2.5 w-[52px] text-right text-[11px] leading-[19px] whitespace-nowrap">
          <div>11:58 AM</div>
          <div>2/5/2020</div>
        </div>
        <button type="button" aria-label="Notifications" className="relative ml-4 h-8 w-7">
          <Icon w={20} h={20} sw={1.300} className="absolute top-1 left-0 text-white"><path d="M2 3h14v11H9l-3 3v-3H2Z" fill="#fff" /><path d="M4 6h10M4 8.500h10M4 11h7" stroke="#213545" /></Icon>
          <span className="absolute right-0 bottom-0 flex h-[18px] w-[18px] items-center justify-center rounded-full border border-[#9099a3] bg-[#2a3140] text-[11px]">12</span>
        </button>
      </div>
    </footer>
  );
}

export default function App() {
  return (
    <div className="flex h-screen flex-col overflow-hidden font-['Noto_Sans',sans-serif]">
      <TitleBar />
      <MenuBar />
      <TabBar />
      <Toolbar />
      <div className="flex min-h-0 flex-1">
        <LeftRail />
        <BookmarksPanel />
        <Splitter />
        <DocumentView />
        <DocumentScrollbar />
        <Splitter />
        <ToolsRail />
      </div>
      <Taskbar />
    </div>
  );
}
